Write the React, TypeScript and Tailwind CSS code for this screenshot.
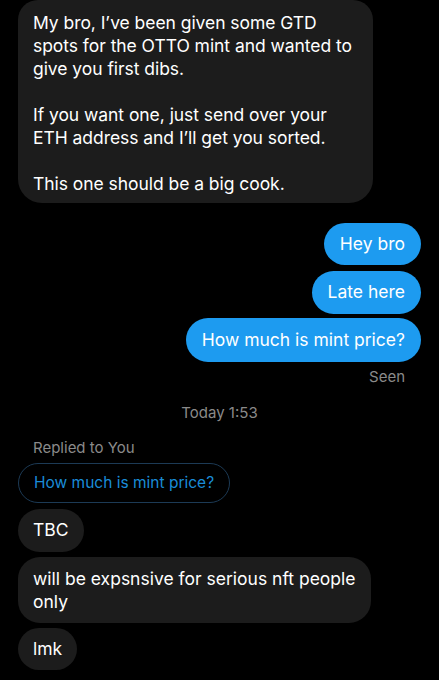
export default function App() {
  return (
    <div
      className="min-h-[680px] w-full bg-black px-[18px] text-white"
      style={{ fontFamily: "Inter, 'Noto Sans', sans-serif" }}
    >
      {/* their long message */}
      <div className="w-[355px] rounded-b-[24px] rounded-t-[20px] bg-[#1c1c1c] pb-[8px] pl-[15px] pr-[10px] pt-[11px] text-[17.5px] leading-[23px] tracking-[-0.05px]">
        <p>My bro, I’ve been given some GTD spots for the OTTO mint and wanted to give you first dibs.</p>
        <p className="mt-[23px]">If you want one, just send over your ETH address and I’ll get you sorted.</p>
        <p className="mt-[23px]">This one should be a big cook.</p>
      </div>

      {/* my messages */}
      <div className="mt-[20px] flex flex-col items-end">
        <div className="flex h-[42px] items-center rounded-full bg-[#1d9bf0] px-[16px] text-[17.5px]">Hey bro</div>
        <div className="mt-[6px] flex h-[43px] items-center rounded-full bg-[#1d9bf0] px-[16px] text-[17.5px]">Late here</div>
        <div className="mt-[4px] flex h-[44px] items-center rounded-full bg-[#1d9bf0] px-[16px] text-[17.5px]">How much is mint price?</div>
      </div>
      <div className="mt-[5px] pr-[16px] text-right text-[15px] leading-[20px] text-[#8a8a8a]">Seen</div>

      <div className="mt-[16px] text-center text-[15px] leading-[20px] text-[#8a8a8a]">Today 1:53</div>

      {/* reply */}
      <div className="mt-[15px] pl-[15px] text-[15px] leading-[20px] text-[#8a8a8a]">Replied to You</div>
      <div className="mt-[5px] flex flex-col items-start">
        <div className="flex h-[40px] items-center rounded-full border border-[#1c3a55] px-[15px] text-[15.5px] text-[#1a8cd8]">
          How much is mint price?
        </div>
        <div className="mt-[6px] flex h-[43px] items-center rounded-full bg-[#1c1c1c] px-[15px] text-[17.5px]">TBC</div>
        <div className="mt-[5px] w-[353px] rounded-[22px] bg-[#1c1c1c] pb-[10px] pl-[15px] pr-[12px] pt-[10px] text-[17.5px] leading-[23px] h-[66px]">
          will be expsnsive for serious nft people only
        </div>
        <div className="mt-[5px] flex h-[42px] items-center rounded-full bg-[#1c1c1c] px-[15px] text-[17.5px]">lmk</div>
      </div>
    </div>
  );
}
